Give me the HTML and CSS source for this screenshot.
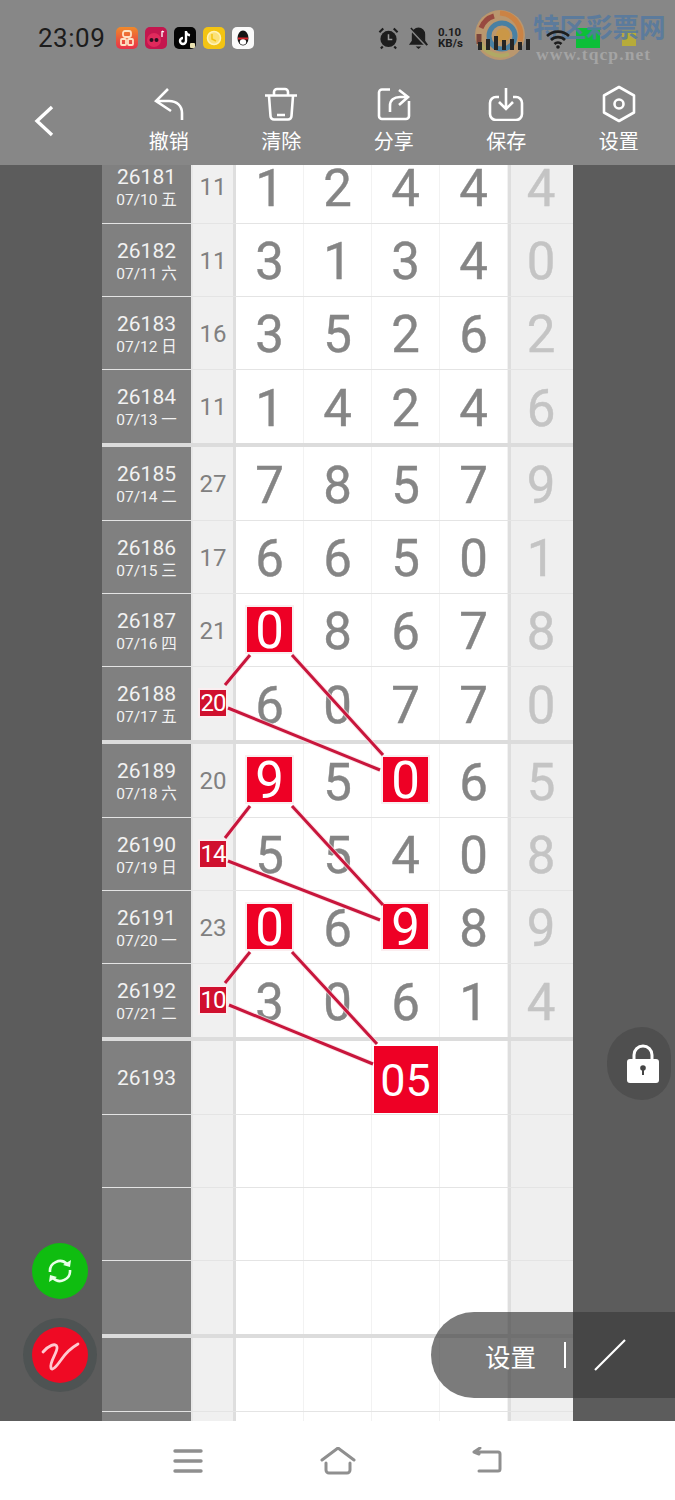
FILE: index.html
```html
<!DOCTYPE html>
<html lang="zh">
<head>
  <meta charset="UTF-8" />
  <meta name="viewport" content="width=device-width, initial-scale=1.0" />
  <title>排列五 走势图</title>
  <link rel="stylesheet" href="styles.css">
</head>
<body>
<div class="page">
  <header class="top">
    <div class="status">
      <span class="time">23:09</span>
      <div class="apps">
        <svg class="app" viewBox="0 0 22 22"><defs><linearGradient id="g1" x1="0" y1="0" x2="0" y2="1"><stop offset="0" stop-color="#f08a2a"/><stop offset="1" stop-color="#e8304a"/></linearGradient></defs><rect width="22" height="22" rx="5" fill="url(#g1)"/><rect x="7" y="4" width="8" height="6" rx="2" fill="none" stroke="#ffe2c4" stroke-width="1.800"/><rect x="5" y="12" width="5" height="6" rx="1" fill="none" stroke="#ffe2c4" stroke-width="1.800"/><rect x="12" y="12" width="5" height="6" rx="1" fill="none" stroke="#ffe2c4" stroke-width="1.800"/></svg>
        <svg class="app" viewBox="0 0 22 22"><rect width="22" height="22" rx="5" fill="#c4164e"/><circle cx="9" cy="13" r="7" fill="#e02a5c"/><circle cx="6.500" cy="13" r="2" fill="#2a1020"/><circle cx="11.500" cy="13" r="2" fill="#2a1020"/><path d="M17 4v6M17 4l2 1" stroke="#fff" stroke-width="1.300" fill="none"/></svg>
        <svg class="app" viewBox="0 0 22 22"><rect width="22" height="22" rx="5" fill="#050505"/><path d="M12 4v10a3 3 0 1 1-3-3M12 5c.5 2 2 3 4 3.200" stroke="#fff" stroke-width="2.400" fill="none"/><rect x="16" y="16" width="5" height="5" rx="1" fill="#e8e0b0"/></svg>
        <svg class="app" viewBox="0 0 22 22"><rect width="22" height="22" rx="5" fill="#f3c413"/><circle cx="11" cy="11" r="6.500" fill="#fbe27a" stroke="#fff3b8" stroke-width="1.500"/><path d="M9 7v5l4 2" stroke="#f3c413" stroke-width="1.500" fill="none"/></svg>
        <svg class="app" viewBox="0 0 22 22"><rect width="22" height="22" rx="5" fill="#fafafa"/><ellipse cx="11" cy="11" rx="5.500" ry="7.500" fill="#151515"/><path d="M6 10.500h10v2H6z" fill="#d9262c"/><ellipse cx="11" cy="15" rx="3.200" ry="2.800" fill="#fff"/></svg>
      </div>
      <div class="sys">
        <svg class="sys-icon" viewBox="0 0 22 24"><circle cx="11" cy="13" r="8.500" fill="#1d1d1d"/><path d="M11 8v5.500h4" stroke="#999" stroke-width="1.600" fill="none"/><path d="M1.500 6l4-4M20.500 6l-4-4M5 21l-2 2M17 21l2 2" stroke="#1d1d1d" stroke-width="2.200"/></svg>
        <svg class="sys-icon" viewBox="0 0 22 24"><path d="M11 1a7 7 0 0 0-7 7v7l-3 4h20l-3-4V8a7 7 0 0 0-7-7zM8 21h6l-3 2.500z" fill="#1d1d1d"/><path d="M3 3l17 18" stroke="#878787" stroke-width="2.600"/><path d="M3 1.500l17 18" stroke="#1d1d1d" stroke-width="1.500"/></svg>
        <div class="speed"><b>0.10</b><b>KB/s</b></div>
        <div class="signal">
          <i class="h8"></i><i class="h11"></i><i class="h14"></i><i class="h10"></i><i class="h11"></i><i class="h8"></i><i class="h11"></i>
        </div>
        <svg class="wifi" viewBox="0 0 24 20"><path d="M1 7a16 16 0 0 1 22 0M5 11a10 10 0 0 1 14 0M8.500 15a5 5 0 0 1 7 0" stroke="#1d1d1d" stroke-width="2.600" fill="none"/><circle cx="12" cy="18" r="1.800" fill="#1d1d1d"/></svg>
        <span class="batt"></span>
        <span class="batt-end"></span>
      </div>
    </div>
    <nav class="tools">
      <a class="tool back">
        <svg width="22" height="34" viewBox="0 0 22 34"><path d="M19 3L4 17l15 14" stroke="#fff" stroke-width="3.400" fill="none"/></svg>
      </a>
      <a class="tool">
        <svg width="30" height="34" viewBox="0 0 30 34"><path d="M14 2L2 14l15 10M2 14h13c8 0 13 5 13 12v7" stroke="#fff" stroke-width="2.600" fill="none"/></svg>
        <span>撤销</span>
      </a>
      <a class="tool">
        <svg width="34" height="34" viewBox="0 0 34 34"><path d="M1 8.500h32M10 8V5a3 3 0 0 1 3-3h8a3 3 0 0 1 3 3v3M5 9l1.500 20a3.500 3.500 0 0 0 3.500 3.500h14a3.500 3.500 0 0 0 3.500-3.500L29 9M13 28h8" stroke="#fff" stroke-width="2.600" fill="none"/></svg>
        <span>清除</span>
      </a>
      <a class="tool">
        <svg width="34" height="34" viewBox="0 0 34 34"><path d="M13 2.500H5a3 3 0 0 0-3 3V29a3 3 0 0 0 3 3h24a3 3 0 0 0 3-3V14" stroke="#fff" stroke-width="2.600" fill="none"/><path d="M13 25v-6c0-6 4-9 10-9h8M22 3l9 7-9 8" stroke="#fff" stroke-width="2.600" fill="none"/></svg>
        <span>分享</span>
      </a>
      <a class="tool">
        <svg width="36" height="34" viewBox="0 0 36 34"><path d="M11 10H8a6 6 0 0 0-6 6v11a6 6 0 0 0 6 6h20a6 6 0 0 0 6-6V16a6 6 0 0 0-6-6h-3" stroke="#fff" stroke-width="2.600" fill="none"/><path d="M18 1v21M11 15l7 7 7-7" stroke="#fff" stroke-width="2.600" fill="none"/></svg>
        <span>保存</span>
      </a>
      <a class="tool">
        <svg width="34" height="34" viewBox="0 0 34 34" class="hex"><path d="M17 0l15 8.500v17L17 34 2 25.500v-17z" stroke="#fff" stroke-width="2.600" fill="none" stroke-linejoin="round"/><circle cx="17" cy="17" r="4.500" stroke="#fff" stroke-width="2.600" fill="none"/></svg>
        <span>设置</span>
      </a>
    </nav>
  </header>

  <main class="main">
    <div class="table">
      <div class="row first"><div class="issue"><b>26181</b><small>07/10 五</small></div><div class="sum">11</div><div class="nums"><span>1</span><span>2</span><span>4</span><span>4</span></div><div class="last">4</div></div>
      <div class="row"><div class="issue"><b>26182</b><small>07/11 六</small></div><div class="sum">11</div><div class="nums"><span>3</span><span>1</span><span>3</span><span>4</span></div><div class="last">0</div></div>
      <div class="row"><div class="issue"><b>26183</b><small>07/12 日</small></div><div class="sum">16</div><div class="nums"><span>3</span><span>5</span><span>2</span><span>6</span></div><div class="last">2</div></div>
      <div class="row end"><div class="issue"><b>26184</b><small>07/13 一</small></div><div class="sum">11</div><div class="nums"><span>1</span><span>4</span><span>2</span><span>4</span></div><div class="last">6</div></div>

      <div class="row first"><div class="issue"><b>26185</b><small>07/14 二</small></div><div class="sum">27</div><div class="nums"><span>7</span><span>8</span><span>5</span><span>7</span></div><div class="last">9</div></div>
      <div class="row"><div class="issue"><b>26186</b><small>07/15 三</small></div><div class="sum">17</div><div class="nums"><span>6</span><span>6</span><span>5</span><span>0</span></div><div class="last">1</div></div>
      <div class="row"><div class="issue"><b>26187</b><small>07/16 四</small></div><div class="sum">21</div><div class="nums"><span><em class="mark">0</em></span><span>8</span><span>6</span><span>7</span></div><div class="last">8</div></div>
      <div class="row end"><div class="issue"><b>26188</b><small>07/17 五</small></div><div class="sum"><em class="mark small">20</em></div><div class="nums"><span>6</span><span>0</span><span>7</span><span>7</span></div><div class="last">0</div></div>

      <div class="row first"><div class="issue"><b>26189</b><small>07/18 六</small></div><div class="sum">20</div><div class="nums"><span><em class="mark">9</em></span><span>5</span><span><em class="mark">0</em></span><span>6</span></div><div class="last">5</div></div>
      <div class="row"><div class="issue"><b>26190</b><small>07/19 日</small></div><div class="sum"><em class="mark small">14</em></div><div class="nums"><span>5</span><span>5</span><span>4</span><span>0</span></div><div class="last">8</div></div>
      <div class="row"><div class="issue"><b>26191</b><small>07/20 一</small></div><div class="sum">23</div><div class="nums"><span><em class="mark">0</em></span><span>6</span><span><em class="mark">9</em></span><span>8</span></div><div class="last">9</div></div>
      <div class="row end"><div class="issue"><b>26192</b><small>07/21 二</small></div><div class="sum"><em class="mark small">10</em></div><div class="nums"><span>3</span><span>0</span><span>6</span><span>1</span></div><div class="last">4</div></div>

      <div class="row first"><div class="issue"><b>26193</b></div><div class="sum"></div><div class="nums"><span></span><span></span><span><em class="mark big">05</em></span><span></span></div><div class="last"></div></div>
      <div class="row"><div class="issue"></div><div class="sum"></div><div class="nums"><span></span><span></span><span></span><span></span></div><div class="last"></div></div>
      <div class="row"><div class="issue"></div><div class="sum"></div><div class="nums"><span></span><span></span><span></span><span></span></div><div class="last"></div></div>
      <div class="row end"><div class="issue"></div><div class="sum"></div><div class="nums"><span></span><span></span><span></span><span></span></div><div class="last"></div></div>

      <div class="row first"><div class="issue"></div><div class="sum"></div><div class="nums"><span></span><span></span><span></span><span></span></div><div class="last"></div></div>
      <div class="row"><div class="issue"></div><div class="sum"></div><div class="nums"><span></span><span></span><span></span><span></span></div><div class="last"></div></div>
    </div>
  </main>

  <footer class="navbar">
    <svg width="30" height="28" viewBox="0 0 30 28"><path d="M2 4h26M2 14h26M2 24h26" stroke="#8f8f8f" stroke-width="3.400" stroke-linecap="round"/></svg>
    <svg width="36" height="28" viewBox="0 0 36 28"><path d="M2 13L18 1l16 12M6 16v7a3 3 0 0 0 3 3h18a3 3 0 0 0 3-3v-7" stroke="#8f8f8f" stroke-width="3" fill="none" stroke-linecap="round" stroke-linejoin="round"/></svg>
    <svg width="30" height="28" viewBox="0 0 30 28"><path d="M2 5h24a2 2 0 0 1 2 2v15a2 2 0 0 1-2 2H7M8 1L2 5l5 2" stroke="#8f8f8f" stroke-width="3" fill="none" stroke-linecap="round" stroke-linejoin="round"/></svg>
  </footer>

  <!-- 连线 -->
  <svg class="lines" viewBox="0 0 675 1421">
    <g class="halo">
      <path d="M250 655L225 685M292 655L383 755M228 708L380 770"/>
      <path d="M250 806L225 838M292 806L383 905M228 861L380 920"/>
      <path d="M250 952L225 983M292 952L377 1044M229 1005L373 1064"/>
    </g>
    <g class="line">
      <path d="M250 655L225 685M292 655L383 755M228 708L380 770"/>
      <path d="M250 806L225 838M292 806L383 905M228 861L380 920"/>
      <path d="M250 952L225 983M292 952L377 1044M229 1005L373 1064"/>
    </g>
  </svg>

  <div class="watermark">
    <svg class="wm-logo" viewBox="0 0 50 50">
      <circle cx="25" cy="25" r="25" fill="#c49a6a"/>
      <path d="M25 3a22 22 0 0 1 20 28" stroke="#d8833a" stroke-width="5" fill="none"/>
      <path d="M4 28a22 22 0 0 0 30 16" stroke="#b8b060" stroke-width="4" fill="none"/>
      <path d="M6 18a20 20 0 0 1 13-12" stroke="#9c3f34" stroke-width="5" fill="none"/>
      <path d="M4 24v10" stroke="#7a3a30" stroke-width="5"/>
      <circle cx="27" cy="26" r="13" fill="none" stroke="#3f7fa8" stroke-width="5"/>
      <circle cx="28" cy="25" r="7" fill="#d69a3c"/>
    </svg>
    <div class="wm-text">
      <strong>特区彩票网</strong>
      <span>www.tqcp.net</span>
    </div>
  </div>

  <button class="fab green">
    <svg width="32" height="32" viewBox="0 0 32 32"><path d="M6 17a10 10 0 0 1 17-8M26 15a10 10 0 0 1-17 8" stroke="#e8ffe8" stroke-width="2.600" fill="none"/><path d="M19 10l7 2 1-7zM13 22l-7-2-1 7z" fill="#e8ffe8"/></svg>
  </button>
  <button class="fab red">
    <svg width="50" height="50" viewBox="0 0 50 50"><path d="M8 22c5-6 13-10 14-5 1 5-8 15-6 21 1 3 5-1 10-8 4-6 10-12 17-16" stroke="#ffc9d0" stroke-width="2.800" fill="none" stroke-linecap="round"/></svg>
  </button>
  <button class="lock">
    <svg width="32" height="40" viewBox="0 0 32 40"><path d="M7 17v-6a9 9 0 0 1 18 0v6" stroke="#fff" stroke-width="3" fill="none"/><rect y="15" width="32" height="24" rx="3" fill="#fff"/><circle cx="16" cy="24" r="2.800" fill="#444"/><path d="M16 25v6" stroke="#444" stroke-width="2"/></svg>
  </button>
  <div class="pill">
    <span>设置</span>
    <i class="pill-sep"></i>
    <svg width="32" height="32" viewBox="0 0 32 32"><path d="M1 31L31 1" stroke="#fff" stroke-width="2.200"/></svg>
  </div>
</div>
</body>
</html>
```

FILE: styles.css
```css
html, body {
  margin: 0;
  padding: 0;
  background: #fff;
  font-family: 'Roboto', 'Noto Sans CJK SC', sans-serif;
}
.page {
  position: relative;
  width: 675px;
  height: 1500px;
  overflow: hidden;
}

/* top bar */
.top {
  height: 165px;
  background: #878787;
}
.status {
  display: flex;
  align-items: center;
  height: 75px;
  padding-left: 38px;
}
.time {
  width: 78px;
  font-size: 26px;
  letter-spacing: 0.5px;
  color: #1c1c1c;
}
.apps {
  display: flex;
  gap: 7px;
}
.app {
  width: 22px;
  height: 22px;
}
.sys {
  display: flex;
  align-items: center;
  margin-left: 124px;
}
.sys-icon {
  width: 21px;
  height: 24px;
  margin-right: 9px;
}
.speed {
  display: flex;
  flex-direction: column;
  font-size: 11.5px;
  line-height: 11px;
  color: #1d1d1d;
  width: 28px;
}
.signal {
  display: flex;
  align-items: flex-end;
  gap: 4px;
  width: 56px;
  height: 14px;
  margin: 10px 0 0 12px;
  position: relative;
  z-index: 2;
}
.signal i {
  width: 4px;
  background: #252525;
}
.signal .h8 { height: 8px; }
.signal .h10 { height: 10px; }
.signal .h11 { height: 11px; }
.signal .h14 { height: 14px; }
.wifi {
  width: 24px;
  height: 20px;
  margin: 2px 0 0 12px;
  position: relative;
  z-index: 2;
}
.batt {
  width: 24px;
  height: 20px;
  margin: 0 0 0 6px;
  background: #0cbf38;
}
.batt-end {
  width: 14px;
  height: 16px;
  margin-left: 22px;
  background: #b7ab3a;
}
.tools {
  display: grid;
  grid-template-columns: repeat(6, 1fr);
  height: 90px;
}
.tool {
  display: flex;
  flex-direction: column;
  align-items: center;
  padding-top: 12px;
  color: #fff;
}
.tool span {
  font-size: 20px;
  line-height: 28px;
  margin-top: 7px;
}
.hex {
  overflow: visible;
}
.back {
  align-items: flex-start;
  padding: 29px 0 0 33px;
}

/* table */
.main {
  height: 1256px;
  overflow: hidden;
  background: #5c5c5c;
}
.table {
  width: 471px;
  margin: -15px 0 0 102px;
}
.row {
  display: flex;
  height: 72px;
  border-bottom: 1px solid #e4e4e4;
  background: #fff;
}
.row.first {
  height: 73px;
}
.row.end {
  height: 73px;
  border-bottom: 4px solid #dcdcdc;
}
.issue {
  display: flex;
  flex-direction: column;
  justify-content: center;
  align-items: center;
  width: 89px;
  padding-top: 1px;
  box-sizing: border-box;
  background: #808080;
  color: #f2f2f2;
}
.issue b {
  font-weight: 400;
  font-size: 21px;
  line-height: 26px;
}
.issue small {
  font-size: 15.5px;
  line-height: 20px;
}
.sum {
  display: flex;
  justify-content: center;
  align-items: center;
  width: 40px;
  padding-top: 1px;
  border-left: 2px solid #e8e8e8;
  border-right: 3px solid #dedede;
  background: #f0f0f0;
  font-size: 24px;
  color: #808080;
}
.nums {
  display: grid;
  grid-template-columns: repeat(4, 68px);
  width: 272px;
  border-right: 3px solid #dedede;
}
.nums span {
  display: flex;
  justify-content: center;
  align-items: center;
  padding-top: 4px;
  border-right: 1px solid #f2f2f2;
  font-size: 51px;
  line-height: 40px;
  font-weight: 400;
  -webkit-text-stroke: 0.4px #858585;
  color: #858585;
}
.last {
  display: flex;
  flex: 1;
  justify-content: center;
  align-items: center;
  padding: 4px 2px 0 0;
  background: #efefef;
  font-size: 51px;
  line-height: 40px;
  -webkit-text-stroke: 0.4px #c4c4c4;
  color: #c4c4c4;
}
.mark {
  display: flex;
  justify-content: center;
  align-items: center;
  flex: none;
  box-sizing: border-box;
  width: 45px;
  height: 45px;
  padding-top: 3px;
  background: #ee0025;
  box-shadow: 0 0 0 2px #faeef0;
  font-style: normal;
  font-size: 51px;
  -webkit-text-stroke: 0;
  color: #fff;
  position: relative;
  top: -3px;
}
.mark.small {
  width: 26px;
  height: 26px;
  padding-top: 0;
  background: #d0102e;
  font-size: 24px;
  letter-spacing: -1px;
  top: -1px;
}
.mark.big {
  width: 64px;
  height: 67px;
  padding-top: 3px;
  font-size: 45px;
  top: 0;
  box-shadow: none;
}

/* bottom nav */
.navbar {
  display: flex;
  justify-content: space-between;
  align-items: center;
  height: 79px;
  padding: 0 173px;
  background: #fff;
}

/* overlays */
.lines {
  position: absolute;
  top: 0;
  left: 0;
  width: 675px;
  height: 1421px;
  pointer-events: none;
}
.lines path {
  fill: none;
}
.halo path {
  stroke: #fbdde2;
  stroke-width: 5;
  opacity: 0.7;
}
.line path {
  stroke: #c8163c;
  stroke-width: 3;
}
.watermark {
  position: absolute;
  top: 10px;
  left: 475px;
  display: flex;
  opacity: 0.85;
}
.wm-logo {
  width: 50px;
  height: 50px;
  margin-right: 8px;
}
.wm-text {
  display: flex;
  flex-direction: column;
}
.wm-text strong {
  font-size: 26.500px;
  line-height: 36px;
  font-weight: 700;
  color: #557aa0;
}
.wm-text span {
  font-family: 'Liberation Serif', serif;
  font-weight: 700;
  font-size: 17.500px;
  line-height: 16px;
  letter-spacing: 1.100px;
  margin-left: 3px;
  color: #aaaaaa;
}
.fab {
  position: absolute;
  left: 32px;
  display: flex;
  justify-content: center;
  align-items: center;
  width: 56px;
  height: 56px;
  padding: 0;
  border: 0;
  border-radius: 50%;
}
.green {
  top: 1243px;
  background: #0fbd10;
}
.red {
  top: 1327px;
  background: #ef0a24;
  box-shadow: 0 0 0 9px #4e5353;
}
.lock {
  position: absolute;
  top: 1027px;
  left: 607px;
  display: flex;
  justify-content: center;
  align-items: center;
  box-sizing: border-box;
  width: 64px;
  height: 73px;
  padding: 0 0 0 8px;
  border: 0;
  border-radius: 36px 30px 30px 36px;
  background: #4f4f4f;
}
.pill {
  position: absolute;
  top: 1312px;
  left: 431px;
  display: flex;
  align-items: center;
  width: 244px;
  height: 86px;
  border-radius: 43px 0 0 43px;
  background: rgba(60, 60, 60, 0.68);
  color: #fff;
}
.pill span {
  margin-left: 54px;
  font-size: 25.5px;
}
.pill-sep {
  width: 2px;
  height: 26px;
  margin: 0 28px 0 28px;
  background: #fff;
}
```
